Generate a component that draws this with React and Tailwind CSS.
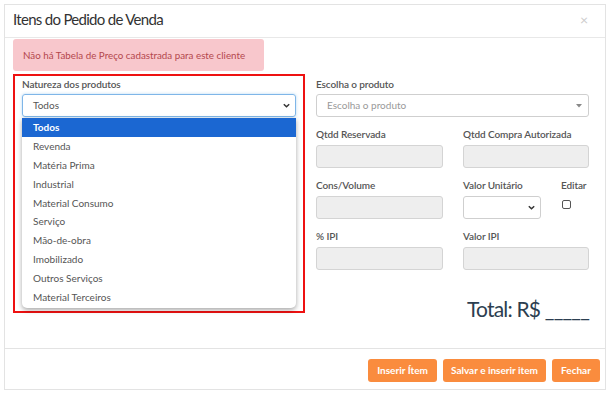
import React from "react";

const F = { fontFamily: "Lato, 'Open Sans', sans-serif" };

function Label({ children, className = "" }) {
  return (
    <div className={"text-[10px] font-semibold text-[#555] leading-[14px] tracking-[-0.1px] " + className}>{children}</div>
  );
}

function GrayInput({ className = "" }) {
  return <div className={"h-[23px] rounded-[3px] border border-[#d4d4d4] bg-[#eeeeee] " + className} />;
}

export default function App() {
  const opts = [
    "Todos",
    "Revenda",
    "Matéria Prima",
    "Industrial",
    "Material Consumo",
    "Serviço",
    "Mão-de-obra",
    "Imobilizado",
    "Outros Serviços",
    "Material Terceiros",
  ];
  return (
    <div className="w-[613px] h-[395px] bg-white pt-[4px] pl-[4px]" style={F}>
      <div className="w-[602px] h-[386px] border border-[#e3e3e3] flex flex-col">
        {/* header */}
        <div className="h-[33px] border-b border-[#e8e8e8] flex items-center justify-between pl-[8px] pr-[17px] pb-[3px]">
          <div className="text-[15px] text-[#333] leading-none tracking-[-0.7px]">Itens do Pedido de Venda</div>
          <div className="text-[14px] text-[#cccccc] leading-none">×</div>
        </div>
        {/* body */}
        <div className="flex-1 pl-[8px] pt-[1px] relative">
          <div className="w-[251px] h-[32px] rounded-[3px] bg-[#f8c7cc] flex items-center pl-[10px] text-[9.8px] text-[#b4484d]">
            Não há Tabela de Preço cadastrada para este cliente
          </div>
          <div className="flex mt-[3px]">
            <div className="w-[292px] h-[239px] border-2 border-[#ee1111] pl-[7px] pt-[1px] relative">
              <Label>Natureza dos produtos</Label>
              <div className="mt-[3px] w-[274px] h-[23px] rounded-[3px] border border-[#7fb6e8] flex items-center justify-between pl-[10px] pr-[4px] text-[10px] text-[#555] shadow-[0_0_3px_rgba(102,175,233,0.5)]">
                <span>Todos</span>
                <svg width="9" height="9" viewBox="0 0 10 10"><path d="M2 3.5 L5 6.5 L8 3.5" stroke="#333" strokeWidth="1.6" fill="none" /></svg>
              </div>
              <div className="absolute left-[7px] top-[42px] w-[274px] bg-white rounded-b-[5px] shadow-[0_2px_5px_rgba(0,0,0,0.35)] overflow-hidden pb-[1px]">
                {opts.map((o, i) => (
                  <div
                    key={o}
                    className={
                      "h-[18.9px] flex items-center pl-[11px] text-[10px] " +
                      (i === 0 ? "bg-[#1b67d2] text-white font-bold" : "text-[#555]")
                    }
                  >
                    {o}
                  </div>
                ))}
              </div>
            </div>
            <div className="ml-[11px] w-[273px] pt-[3px]">
              <Label>Escolha o produto</Label>
              <div className="mt-[3px] h-[23px] rounded-[3px] border border-[#cfcfcf] flex items-center justify-between pl-[10px] pr-[6px] text-[10px] text-[#999]">
                <span>Escolha o produto</span>
                <svg width="6" height="4" viewBox="0 0 6 4"><path d="M0 0 L6 0 L3 3.5 Z" fill="#888" /></svg>
              </div>
              <div className="flex gap-[20px] mt-[10px]">
                <div className="w-[127px]">
                  <Label>Qtdd Reservada</Label>
                  <GrayInput className="mt-[4px]" />
                </div>
                <div className="w-[126px]">
                  <Label>Qtdd Compra Autorizada</Label>
                  <GrayInput className="mt-[4px]" />
                </div>
              </div>
              <div className="flex mt-[10px]">
                <div className="w-[127px]">
                  <Label>Cons/Volume</Label>
                  <GrayInput className="mt-[4px]" />
                </div>
                <div className="w-[78px] ml-[20px]">
                  <Label>Valor Unitário</Label>
                  <div className="mt-[4px] h-[23px] rounded-[3px] border border-[#cfcfcf] flex items-center justify-end pr-[4px]">
                    <svg width="9" height="9" viewBox="0 0 10 10"><path d="M2 3.5 L5 6.5 L8 3.5" stroke="#333" strokeWidth="1.6" fill="none" /></svg>
                  </div>
                </div>
                <div className="ml-[20px]">
                  <Label>Editar</Label>
                  <div className="mt-[8px] ml-[1px] w-[9px] h-[9px] rounded-[2px] border border-[#555] bg-white" />
                </div>
              </div>
              <div className="flex gap-[20px] mt-[10px]">
                <div className="w-[127px]">
                  <Label>% IPI</Label>
                  <GrayInput className="mt-[4px]" />
                </div>
                <div className="w-[126px]">
                  <Label>Valor IPI</Label>
                  <GrayInput className="mt-[4px]" />
                </div>
              </div>
              <div className="flex justify-end mt-[28px] pr-[0px]">
                <div className="text-[21px] text-[#2c3e50] leading-none tracking-[-0.8px]">Total: R$ _____</div>
              </div>
            </div>
          </div>
        </div>
        {/* footer */}
        <div className="h-[41px] border-t border-[#e3e3e3] flex items-center justify-end gap-[6px] pr-[5px] pt-[2px]">
          <div className="w-[69px] h-[23px] rounded-[3px] bg-[#fa8c3e] text-white text-[10px] font-bold flex items-center justify-center">Inserir Ítem</div>
          <div className="w-[103px] h-[23px] rounded-[3px] bg-[#fa8c3e] text-white text-[10px] font-bold flex items-center justify-center">Salvar e inserir item</div>
          <div className="w-[48px] h-[23px] rounded-[3px] bg-[#fa8c3e] text-white text-[10px] font-bold flex items-center justify-center">Fechar</div>
        </div>
      </div>
    </div>
  );
}
